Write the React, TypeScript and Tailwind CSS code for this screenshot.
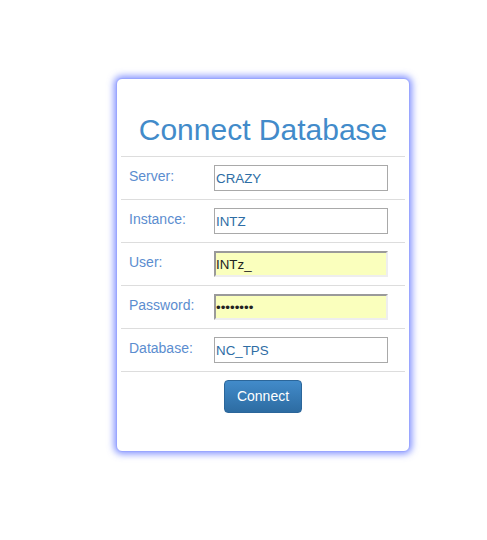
import { useState } from "react";

interface Field {
  label: string;
  value: string;
  type: "text" | "password";
  autofill?: boolean;
}

const fields: Field[] = [
  { label: "Server:", value: "CRAZY", type: "text" },
  { label: "Instance:", value: "INTZ", type: "text" },
  { label: "User:", value: "INTz_", type: "text", autofill: true },
  { label: "Password:", value: "12345678", type: "password", autofill: true },
  { label: "Database:", value: "NC_TPS", type: "text" },
];

export default function App() {
  const [values, setValues] = useState(fields.map((f) => f.value));

  return (
    <div className="min-h-[540px] w-full bg-white pt-[78px] font-['Liberation_Sans',Arial,sans-serif]">
      {/* Card */}
      <div className="ml-[116px] w-[294px] rounded-[6px] border border-[#9aa6ff] bg-white px-[4px] pb-[38px] pt-[34px] shadow-[0_0_7px_2px_rgba(90,110,255,0.75)]">
        <h1 className="mb-[10px] text-center text-[30px] leading-[33px] text-[#428bca]">Connect Database</h1>

        <div className="border-b border-[#dddddd]">
          {fields.map((field, i) => (
            <div key={field.label} className="flex border-t border-[#dddddd] py-[8px] pl-[8px]">
              <label className="w-[85px] pt-[1px] text-[14px] leading-[20px] text-[#5b8dcf]">{field.label}</label>
              <input
                type={field.type}
                value={values[i]}
                onChange={(e) => {
                  const next = [...values];
                  next[i] = e.target.value;
                  setValues(next);
                }}
                className={
                  field.autofill
                    ? "h-[26px] w-[174px] border-2 border-t-[#9a9a9a] border-l-[#9a9a9a] border-r-[#eeeeee] border-b-[#eeeeee] bg-[#faffbd] px-0 text-[13.33px] text-[#222222] outline-none"
                    : "h-[26px] w-[174px] border border-[#a9a9a9] bg-white px-[1px] text-[13.33px] text-[#2e6da4] outline-none"
                }
              />
            </div>
          ))}
        </div>

        <div className="flex justify-center pt-[8px]">
          <button className="h-[33px] w-[78px] rounded-[4px] border border-[#2b669a] bg-gradient-to-b from-[#428bca] to-[#2d6ca2] text-[14px] text-white">
            Connect
          </button>
        </div>
      </div>
    </div>
  );
}
